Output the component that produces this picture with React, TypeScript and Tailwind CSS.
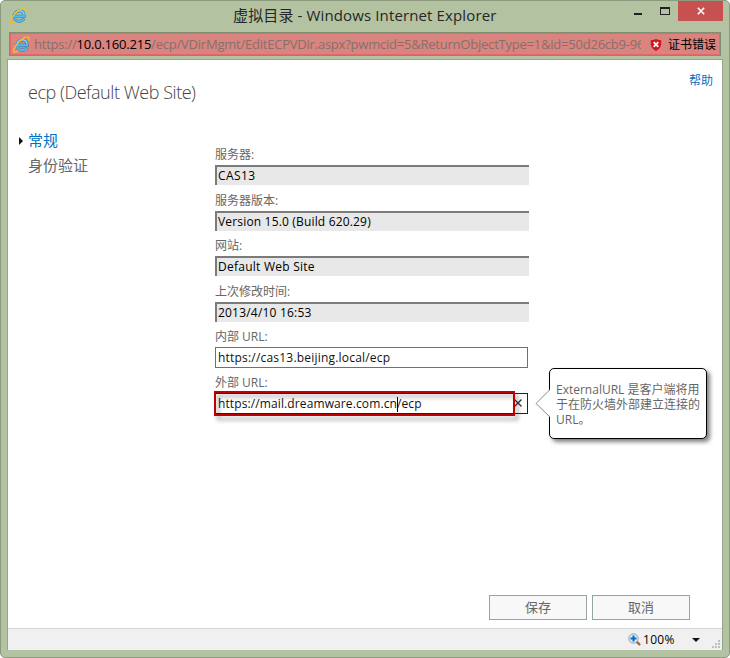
import type { ReactNode } from "react";

const fields = [
  { label: "服务器:", value: "CAS13", height: "h-[46px]", tracking: "tracking-[0.4px]" },
  { label: "服务器版本:", value: "Version 15.0 (Build 620.29)", height: "h-[45px]", tracking: "tracking-[0.17px]" },
  { label: "网站:", value: "Default Web Site", height: "h-[46px]", tracking: "tracking-[0.25px]" },
  { label: "上次修改时间:", value: "2013/4/10 16:53", height: "h-[45px]", tracking: "tracking-[0.2px]" },
];

function IeLogo({ className }: { className: string }) {
  return (
    <svg viewBox="0 0 17 17" fill="none" className={className}>
      {/* letter ring: dark rim, blue body, light shine */}
      <path d="M4.500 9.200h9.700C14.200 5.800 12.200 4 9.300 4 6.300 4 4.100 6.200 4.100 9.200s2.200 5 5.200 5c2.200 0 3.700-.9 4.600-2.600" stroke="#2c7cb5" strokeWidth="3" />
      <path d="M4.500 9.200h9.700C14.200 5.800 12.200 4 9.300 4 6.300 4 4.100 6.200 4.100 9.200s2.200 5 5.200 5c2.200 0 3.700-.9 4.500-2.400" stroke="#52bdec" strokeWidth="2" />
      <path d="M4 7.500C4.800 5 6.700 3.600 9.300 3.600c2.300 0 4.100 1.200 4.700 3.300" stroke="#b2e6fa" strokeWidth="0.8" />
      {/* orbit */}
      <path
        d="M5.300 14.700c-1.900 1.200-3.600 1.700-4.200 1.200C-.2 14.900 1.300 11 4.800 7.100 8.400 3 13.400.2 15.300 1.100c1 .5.900 1.900.2 3.500"
        stroke="#f3bb2c"
        strokeWidth="1.400"
      />
    </svg>
  );
}

function Field({ label, height, children }: { label: string; height: string; children: ReactNode }) {
  return (
    <div className={height}>
      <div className="h-[18px] text-[12px] leading-[15px] text-[#666]">{label}</div>
      {children}
    </div>
  );
}

export default function App() {
  return (
    <div className="flex h-[658px] w-[730px] flex-col overflow-hidden rounded-[5px] border border-[#8c9a7e] bg-[#b3c2a1] px-[6px] pb-[7px] font-['Open_Sans','Noto_Sans_CJK_SC',sans-serif]">
      {/* TITLE BAR */}
      <div className="flex h-[31px] shrink-0">
        <IeLogo className="mt-[6px] ml-[3px] h-[17px] w-[17px]" />
        <div className="mt-[3px] ml-[206px] w-[280px] text-[15px] leading-[22px] tracking-[0.13px] whitespace-nowrap text-[#262626]">
          虚拟目录 - Windows Internet Explorer
        </div>
        <svg viewBox="0 0 48 20" className="ml-[117px] h-5 w-12" shapeRendering="crispEdges">
          <rect x="4" y="12" width="8" height="2" fill="#222" />
          <path d="M30 6h10v8H30z M31 8h8v5h-8z" fill="#222" fillRule="evenodd" />
        </svg>
        <button className="ml-auto flex h-5 w-[45px] items-center justify-center bg-[#c75050]">
          <svg viewBox="0 0 8 8" className="h-2 w-2">
            <path d="M.8.8l6.400 6.400M7.200.8L.8 7.200" stroke="#fff" strokeWidth="1.6" />
          </svg>
        </button>
      </div>
      {/* ADDRESS BAR */}
      <div className="mx-[2px] flex h-6 shrink-0 border border-[#848c72] bg-[#d9847f] text-[13px] leading-[21px]">
        <div className="flex w-full border border-[#e5666e]">
          <IeLogo className="mt-[2px] ml-[2px] h-[17px] w-[17px] shrink-0" />
          <div className="ml-[4px] w-[607px] shrink-0 overflow-hidden tracking-[-0.22px] whitespace-nowrap text-[#86706c]">
            https://<span className="text-black">10.0.160.215</span>
            /ecp/VDirMgmt/EditECPVDir.aspx?pwmcid=5&amp;ReturnObjectType=1&amp;id=50d26cb9-96
          </div>
          <svg viewBox="0 0 12 12" className="mt-[5px] ml-[9px] h-3 w-3 shrink-0">
            <path d="M6 0c1.500.8 3.200 1.100 5 1 .9 4.800-.2 8.800-5 11C1.200 9.800.1 5.800 1 1 2.800 1.100 4.500.8 6 0z" fill="#cf1820" />
            <path d="M3.700 3.200l4.600 4.600M8.300 3.200L3.700 7.800" stroke="#fff" strokeWidth="1.700" />
          </svg>
          <span className="ml-[6px] text-[12px] whitespace-nowrap text-black">证书错误</span>
        </div>
      </div>
      {/* PAGE */}
      <div className="mt-[3px] flex min-h-0 grow flex-col border border-[#97a588] bg-white">
        <div className="relative h-[568px] shrink-0 bg-white">
          <div className="flex justify-between">
            <h1 className="mt-[19px] ml-5 text-[18px] leading-[26px] font-light tracking-[-0.46px] text-[#444]">ecp (Default Web Site)</h1>
            <a className="mt-[12px] mr-[9px] text-[12px] leading-[18px] text-[#0072c6]">帮助</a>
          </div>
          <div className="mt-[42px] flex">
            {/* SIDE MENU */}
            <div className="-mt-[19px] w-[207px] text-[15px] leading-[25px] text-[#666]">
              <div className="flex items-center text-[#0072c6]">
                <svg viewBox="0 0 4 8" className="mr-[5px] ml-[11px] h-2 w-1">
                  <path d="M0 0l4 4-4 4z" fill="#111" />
                </svg>
                常规
              </div>
              <div className="pl-5">身份验证</div>
            </div>
            {/* FORM */}
            <div className="w-[314px] text-[12px]">
              {fields.map((f) => (
                <Field key={f.label} label={f.label} height={f.height}>
                  <div className={`h-5 border-t-2 border-l-2 border-[#7b7b7b] bg-[#e8e8e8] pl-px leading-[18px] text-black ${f.tracking}`}>
                    {f.value}
                  </div>
                </Field>
              ))}
              <Field label="内部 URL:" height="h-[46px]">
                <div className="h-[21px] w-[313px] border border-[#707070] pl-[2px] leading-[19px] tracking-[0.2px] text-[#111]">
                  https://cas13.beijing.local/ecp
                </div>
              </Field>
              <Field label="外部 URL:" height="h-[46px]">
                <div className="relative flex h-[21px] w-[313px] justify-between border border-[#222] pl-[2px] leading-[19px] tracking-[0.11px] text-[#111]">
                  <span>
                    https://mail.dreamware.com.cn
                    <span className="-mr-px inline-block h-[15px] w-px bg-black align-middle" />
                    /ecp
                  </span>
                  <svg viewBox="0 0 8 8" className="mt-[5px] mr-[5px] h-2 w-2">
                    <path d="M.5.5l7 7M7.500.5l-7 7" stroke="#333" strokeWidth="1.300" />
                  </svg>
                  <div className="absolute -top-[3px] -left-[2px] h-[25px] w-[301px] border-2 border-[#c00000] [filter:drop-shadow(3px_4px_2px_rgba(0,0,0,0.4))]" />
                </div>
              </Field>
            </div>
          </div>
          {/* CALLOUT */}
          <div className="absolute top-[308px] left-[541px] h-[71px] w-[158px] rounded-[5px] border border-black bg-white py-[13px] pl-[6px] text-[12px] leading-[15px] whitespace-nowrap text-[#666] shadow-[3px_3px_4px_rgba(0,0,0,0.5)]">
            ExternalURL 是客户端将用
            <br />
            于在防火墙外部建立连接的
            <br />
            URL。
            <svg viewBox="0 0 15 30" className="absolute top-[19px] -left-[15px] h-[30px] w-[15px]">
              <path d="M15 1.500L1 15.500l14 13.500" fill="#fff" stroke="#888" />
            </svg>
          </div>
          {/* BUTTONS */}
          <div className="absolute right-[32px] bottom-[8px] flex gap-[5px] text-[13px] text-[#666]">
            <button className="h-[25px] w-[98px] border border-[#95a5a5] bg-[#f8f8f8] leading-[21px]">保存</button>
            <button className="h-[25px] w-[98px] border border-[#95a5a5] bg-[#f8f8f8] leading-[21px]">取消</button>
          </div>
        </div>
        {/* STATUS BAR */}
        <div className="flex grow justify-end border-t border-[#d7d7d7] bg-[#f0f0f0] text-[12px] leading-[21px] text-black">
          <svg viewBox="0 0 13 13" className="mt-[4px] h-[13px] w-[13px]">
            <path d="M8 8l4 4" stroke="#99643f" strokeWidth="2.400" />
            <circle cx="5.500" cy="5.500" r="4.700" fill="#d8ecfa" stroke="#8da2b5" />
            <path d="M5.500 2.500v6M2.500 5.500h6" stroke="#1266c4" strokeWidth="2" />
          </svg>
          <span className="ml-[2px] w-[49px] tracking-[0.3px]">100%</span>
          <svg viewBox="0 0 8 4" className="mt-[9px] h-1 w-2">
            <path d="M0 0h8L4 4z" fill="#111" />
          </svg>
          <svg viewBox="0 0 8 8" className="mt-[11px] mr-[2px] ml-[12px] h-2 w-2" shapeRendering="crispEdges">
            <path d="M6 0h2v2H6zM3 3h2v2H3zM6 3h2v2H6zM0 6h2v2H0zM3 6h2v2H3zM6 6h2v2H6z" fill="#bdbdbd" />
          </svg>
        </div>
      </div>
    </div>
  );
}
